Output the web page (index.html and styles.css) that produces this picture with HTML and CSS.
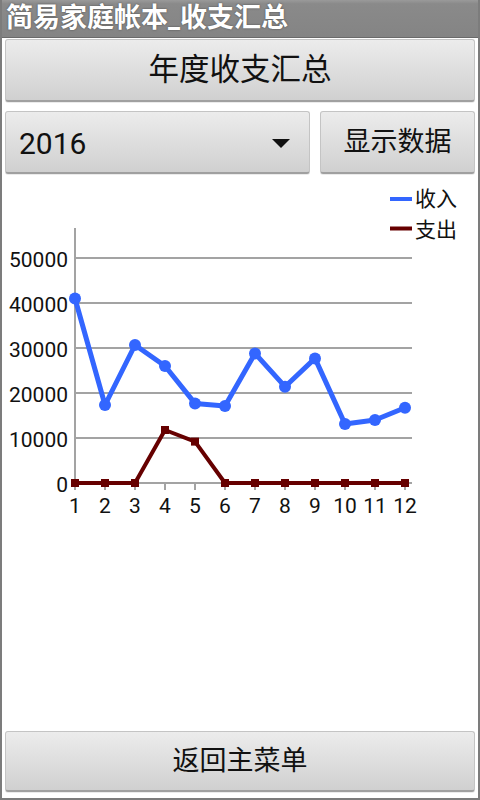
FILE: index.html
```html
<!DOCTYPE html>
<html lang="zh">
<head>
<meta charset="utf-8">
<title>简易家庭帐本_收支汇总</title>
<link rel="stylesheet" href="styles.css">
</head>
<body>
<div class="screen">
  <div class="titlebar">简易家庭帐本_收支汇总</div>
  <div class="content">
    <button class="btn btn-top">年度收支汇总</button>
    <div class="row">
      <div class="btn spinner">
        <span class="spinner-value">2016</span>
        <span class="caret"></span>
      </div>
      <button class="btn btn-show">显示数据</button>
    </div>
    <div class="chart">
      <svg class="chart-svg" viewBox="0 0 476 557" width="476" height="557">
        <g class="grid" stroke="#a3a3a3" stroke-width="2">
          <line x1="72" y1="84" x2="410" y2="84"/>
          <line x1="72" y1="129" x2="410" y2="129"/>
          <line x1="72" y1="174" x2="410" y2="174"/>
          <line x1="72" y1="219" x2="410" y2="219"/>
          <line x1="72" y1="264" x2="410" y2="264"/>
          <line x1="72" y1="309" x2="410" y2="309"/>
          <line x1="73" y1="54" x2="73" y2="316"/>
          <line x1="103" y1="309" x2="103" y2="316"/>
          <line x1="133" y1="309" x2="133" y2="316"/>
          <line x1="163" y1="309" x2="163" y2="316"/>
          <line x1="193" y1="309" x2="193" y2="316"/>
          <line x1="223" y1="309" x2="223" y2="316"/>
          <line x1="253" y1="309" x2="253" y2="316"/>
          <line x1="283" y1="309" x2="283" y2="316"/>
          <line x1="313" y1="309" x2="313" y2="316"/>
          <line x1="343" y1="309" x2="343" y2="316"/>
          <line x1="373" y1="309" x2="373" y2="316"/>
          <line x1="403" y1="309" x2="403" y2="316"/>
        </g>
        <g class="ylabels" text-anchor="end">
          <text x="66" y="93">50000</text>
          <text x="66" y="138">40000</text>
          <text x="66" y="183">30000</text>
          <text x="66" y="228">20000</text>
          <text x="66" y="273">10000</text>
          <text x="66" y="318">0</text>
        </g>
        <g class="xlabels" text-anchor="middle">
          <text x="73" y="339">1</text>
          <text x="103" y="339">2</text>
          <text x="133" y="339">3</text>
          <text x="163" y="339">4</text>
          <text x="193" y="339">5</text>
          <text x="223" y="339">6</text>
          <text x="253" y="339">7</text>
          <text x="283" y="339">8</text>
          <text x="313" y="339">9</text>
          <text x="343" y="339">10</text>
          <text x="373" y="339">11</text>
          <text x="403" y="339">12</text>
        </g>
        <polyline class="expense" points="73,309 103,309 133,309 163,256 193,267.6 223,309 253,309 283,309 313,309 343,309 373,309 403,309"/>
        <g class="expense-dots" fill="#660000">
          <rect x="69" y="305" width="8" height="8"/>
          <rect x="99" y="305" width="8" height="8"/>
          <rect x="129" y="305" width="8" height="8"/>
          <rect x="159" y="252" width="8" height="8"/>
          <rect x="189" y="263.6" width="8" height="8"/>
          <rect x="219" y="305" width="8" height="8"/>
          <rect x="249" y="305" width="8" height="8"/>
          <rect x="279" y="305" width="8" height="8"/>
          <rect x="309" y="305" width="8" height="8"/>
          <rect x="339" y="305" width="8" height="8"/>
          <rect x="369" y="305" width="8" height="8"/>
          <rect x="399" y="305" width="8" height="8"/>
        </g>
        <polyline class="income" points="73,124.5 103,231 133,171 163,192 193,229.4 223,232 253,179.4 283,212.7 313,184.4 343,250 373,246 403,233.8"/>
        <g class="income-dots" fill="#3366ff">
          <circle cx="73" cy="124.5" r="6"/>
          <circle cx="103" cy="231" r="6"/>
          <circle cx="133" cy="171" r="6"/>
          <circle cx="163" cy="192" r="6"/>
          <circle cx="193" cy="229.4" r="6"/>
          <circle cx="223" cy="232" r="6"/>
          <circle cx="253" cy="179.4" r="6"/>
          <circle cx="283" cy="212.7" r="6"/>
          <circle cx="313" cy="184.4" r="6"/>
          <circle cx="343" cy="250" r="6"/>
          <circle cx="373" cy="246" r="6"/>
          <circle cx="403" cy="233.8" r="6"/>
        </g>
        <line x1="388" y1="25" x2="410" y2="25" stroke="#3366ff" stroke-width="4"/>
        <text class="legend" x="413" y="32">收入</text>
        <line x1="388" y1="54.5" x2="410" y2="54.5" stroke="#660000" stroke-width="4"/>
        <text class="legend" x="413" y="63">支出</text>
      </svg>
    </div>
    <button class="btn btn-bottom">返回主菜单</button>
  </div>
</div>
</body>
</html>
```
FILE: styles.css
```css
* { box-sizing: border-box; }
html, body {
  margin: 0;
  padding: 0;
  background: #ffffff;
}
body {
  font-family: Roboto, "Noto Sans CJK SC", "DejaVu Sans", sans-serif;
}
.screen {
  width: 480px;
  height: 800px;
  display: flex;
  flex-direction: column;
  border-left: 2px solid #7c7c7c;
  border-right: 2px solid #7c7c7c;
  border-bottom: 2px solid #7c7c7c;
  background: #ffffff;
  overflow: hidden;
}
.titlebar {
  height: 38px;
  margin: 0 -2px;
  padding-left: 6px;
  background: linear-gradient(#9a9a9a, #8a8a8a 10%, #848484);
  border-bottom: 1px solid #6a6a6a;
  color: #ffffff;
  font-size: 27px;
  line-height: 37px;
  font-weight: 700;
  text-shadow: 0 0 2px rgba(0,0,0,0.5);
  white-space: nowrap;
}
.content {
  flex: 1;
  display: flex;
  flex-direction: column;
  padding: 1px 3px 6px 3px;
}
.btn {
  font-family: Roboto, "Noto Sans CJK SC", sans-serif;
  color: #111111;
  background: linear-gradient(#ececec, #dedede 50%, #d0d0d0);
  border: 1px solid #c4c4c4;
  border-bottom: 2px solid #a0a0a0;
  border-radius: 3px;
  box-shadow: 0 1px 0 rgba(0,0,0,0.08);
  padding: 0;
  margin: 0;
}
.btn-top {
  height: 63px;
  font-size: 30.5px;
  line-height: 60px;
}
.row {
  display: flex;
  gap: 10px;
  margin-top: 9px;
  height: 63px;
}
.spinner {
  width: 305px;
  display: flex;
  align-items: center;
  justify-content: space-between;
  padding: 3px 19px 0 13px;
}
.spinner-value {
  font-size: 30px;
  line-height: 1;
}
.caret {
  width: 0;
  height: 0;
  border-left: 9.5px solid transparent;
  border-right: 9.5px solid transparent;
  border-top: 9px solid #111111;
  margin-top: -1px;
}
.btn-show {
  flex: 1;
  font-size: 27px;
  line-height: 58px;
}
.chart {
  flex: 1;
  margin: 0 -3px;
  display: flex;
}
.chart-svg {
  display: block;
}
.chart-svg text {
  font-family: Roboto, "Noto Sans CJK SC", sans-serif;
  font-size: 21px;
  fill: #111111;
}
.chart-svg .legend {
  font-size: 21px;
}
.income {
  fill: none;
  stroke: #3366ff;
  stroke-width: 5;
  stroke-linejoin: round;
}
.expense {
  fill: none;
  stroke: #660000;
  stroke-width: 4;
  stroke-linejoin: round;
}
.btn-bottom {
  height: 61px;
  font-size: 27px;
  line-height: 58px;
}
```
